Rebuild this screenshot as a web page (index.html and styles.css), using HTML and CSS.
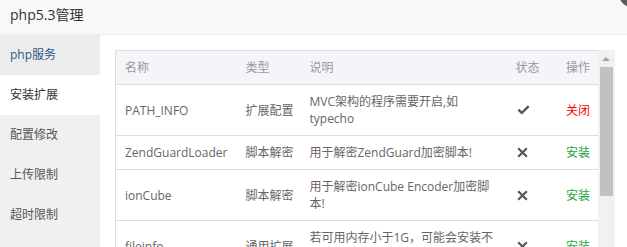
FILE: index.html
```html
<!DOCTYPE html>
<html lang="zh-CN">
<head>
    <meta charset="UTF-8">
    <title>php5.3管理</title>
    <link rel="stylesheet" href="styles.css">
</head>
<body>
    <div class="layer">
        <div class="layer-title">
            php5.3管理
            <span class="layer-close"></span>
        </div>
        <div class="layer-body">
            <ul class="side-menu">
                <li class="menu-item first">php服务</li>
                <li class="menu-item active">安装扩展</li>
                <li class="menu-item">配置修改</li>
                <li class="menu-item">上传限制</li>
                <li class="menu-item">超时限制</li>
            </ul>
            <div class="main">
                <div class="table-box">
                    <div class="table-wrap">
                        <table class="ext-table">
                            <colgroup>
                                <col class="col-name">
                                <col class="col-type">
                                <col class="col-desc">
                                <col class="col-state">
                                <col class="col-op">
                            </colgroup>
                            <thead>
                                <tr>
                                    <th>名称</th>
                                    <th>类型</th>
                                    <th>说明</th>
                                    <th>状态</th>
                                    <th class="op">操作</th>
                                </tr>
                            </thead>
                            <tbody id="rows"></tbody>
                        </table>
                    </div>
                    <div class="scrollbar">
                        <span class="scroll-up"></span>
                        <span class="scroll-thumb"></span>
                    </div>
                </div>
            </div>
        </div>
    </div>

    <script>
        // extension list, status: true = installed
        const exts = [
            ['PATH_INFO', '扩展配置', 'MVC架构的程序需要开启,如typecho', true],
            ['ZendGuardLoader', '脚本解密', '用于解密ZendGuard加密脚本!', false],
            ['ionCube', '脚本解密', '用于解密ionCube Encoder加密脚本!', false],
            ['fileinfo', '通用扩展', '若可用内存小于1G，可能会安装不上!', false]
        ];

        const okIcon = '<svg class="state-icon" width="13" height="10" viewBox="0 0 13 10"><path d="M0.5 5.4 L2.2 3.7 L4.8 6.2 L10.8 0.3 L12.5 2 L4.8 9.6 Z" fill="#555"/></svg>';
        const noIcon = '<svg class="state-icon" width="11" height="11" viewBox="0 0 11 11"><path d="M1.9 0.4 L5.5 4 L9.1 0.4 L10.6 1.9 L7 5.5 L10.6 9.1 L9.1 10.6 L5.5 7 L1.9 10.6 L0.4 9.1 L4 5.5 L0.4 1.9 Z" fill="#555"/></svg>';

        const tbody = document.getElementById('rows');
        exts.forEach(([name, type, desc, on]) => {
            const tr = document.createElement('tr');
            tr.innerHTML = `
                <td>${name}</td>
                <td>${type}</td>
                <td>${desc}</td>
                <td>${on ? okIcon : noIcon}</td>
                <td class="op"><a class="${on ? 'btn-off' : 'btn-on'}">${on ? '关闭' : '安装'}</a></td>`;
            tbody.appendChild(tr);
        });
    </script>
</body>
</html>
```

FILE: styles.css
```css
html, body {
    margin: 0;
    padding: 0;
    overflow: hidden;
    height: 100%;
}
body {
    font-family: "Open Sans", "Noto Sans CJK SC", sans-serif;
    font-size: 12px;
    color: #666;
    background: #fff;
}
.layer {
    position: relative;
    width: 627px;
    height: 100%;
    display: flex;
    flex-direction: column;
}
.layer-title {
    height: 34px;
    line-height: 30px;
    padding-left: 10px;
    font-size: 14px;
    color: #333;
    background: #f8f8f8;
    border-bottom: 1px solid #eee;
}
.layer-close {
    position: absolute;
    top: -31px;
    right: -30px;
    width: 40px;
    height: 40px;
    border-radius: 50%;
    background: #5b5b5b;
}
.layer-body {
    flex: 1;
    display: flex;
    min-height: 0;
}
.side-menu {
    width: 100px;
    margin: 0;
    padding: 0;
    list-style: none;
    background: #f0f0f0;
}
.menu-item {
    height: 40px;
    line-height: 40px;
    padding-left: 10px;
    font-size: 12px;
    color: #555;
}
.menu-item.first {
    color: #2c5887;
    background: #ececec;
}
.menu-item.active {
    background: #fff;
    color: #333;
}
.main {
    flex: 1;
    padding: 15px 12px 0 15px;
    min-height: 0;
}
.table-box {
    display: flex;
    height: 100%;
}
.table-wrap {
    width: 483px;
    overflow: hidden;
}
.ext-table {
    width: 483px;
    table-layout: fixed;
    border-collapse: collapse;
    border: 1px solid #ddd;
}
.ext-table .col-name { width: 121px; }
.ext-table .col-type { width: 64px; }
.ext-table .col-desc { width: 206px; }
.ext-table .col-state { width: 50px; }
.ext-table .col-op { width: 42px; }
.ext-table th,
.ext-table td {
    padding: 8px 5px 8px 9px;
    line-height: 17px;
    text-align: left;
    font-weight: normal;
    border-top: 1px solid #ddd;
    vertical-align: middle;
}
.ext-table th {
    color: #999;
    background: #f4f5f9;
}
.ext-table .op {
    text-align: right;
    padding-right: 8px;
    padding-left: 0;
}
.state-icon {
    display: block;
    margin-left: 1px;
}
.btn-off {
    color: #f00;
}
.btn-on {
    color: #20a53a;
}
.scrollbar {
    width: 17px;
    background: #f1f1f1;
    display: flex;
    flex-direction: column;
    align-items: flex-end;
}
.scroll-up {
    width: 0;
    height: 0;
    margin: 7px 5px 0 0;
    border-left: 4px solid transparent;
    border-right: 4px solid transparent;
    border-bottom: 4px solid #a3a3a3;
}
.scroll-thumb {
    width: 13px;
    height: 129px;
    margin: 6px 2px 0 0;
    background: #c1c1c1;
}
```
